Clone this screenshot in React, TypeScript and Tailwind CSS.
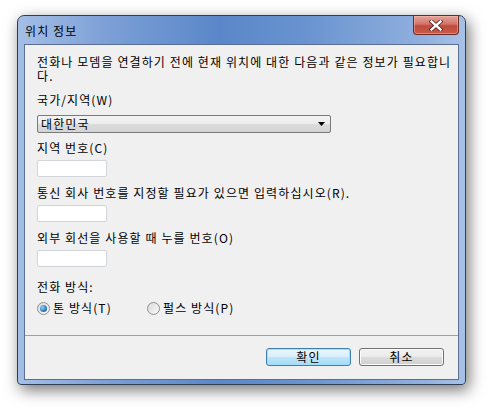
const font = { fontFamily: '"Noto Sans CJK KR", "Noto Sans", sans-serif' };

function CloseButton() {
  return (
    <div className="w-[46px] h-[19px] rounded-b-[4px] border border-t-0 border-[#6a2b26] bg-[linear-gradient(#e6a397_0%,#d1746a_45%,#c04a3c_55%,#c95a45_100%)] shadow-[inset_0_0_0_1px_rgba(255,200,190,0.45)] flex items-center justify-center">
      <svg width="14" height="11" viewBox="0 0 14 11">
        <path d="M2.5 1.5 L11.5 9.5 M11.5 1.5 L2.5 9.5" stroke="#5a1e18" strokeWidth="4" strokeLinecap="square" />
        <path d="M2.5 1.5 L11.5 9.5 M11.5 1.5 L2.5 9.5" stroke="#ffffff" strokeWidth="2.4" strokeLinecap="square" />
      </svg>
    </div>
  );
}

function Field() {
  return <div className="w-[70px] h-[17px] bg-white border border-[#d2d5da] rounded-[2px]" />;
}

function Radio({ checked, label }: { checked?: boolean; label: string }) {
  return (
    <div className="flex items-center gap-[3px]">
      <div className="w-[13px] h-[13px] rounded-full border border-[#8e8f8f] bg-[linear-gradient(135deg,#d9d9d9,#fafafa)] flex items-center justify-center">
        {checked && (
          <div className="w-[7px] h-[7px] rounded-full bg-[radial-gradient(circle_at_35%_35%,#8fd3f7,#1c6fae_70%,#0f4f86)]" />
        )}
      </div>
      <span>{label}</span>
    </div>
  );
}

export default function App() {
  return (
    <div className="w-[490px] h-[409px] bg-white text-[12px] tracking-[1.1px] text-black overflow-hidden" style={font}>
      <div className="ml-[17px] mt-[15px] w-[449px] h-[370px] rounded-t-[7px] rounded-b-[4px] border border-[#2f3d55] bg-[linear-gradient(90deg,#a4bfe6_0%,#7c9fd6_20%,#5a87c9_45%,#6a94d0_65%,#90afde_90%,#a8c2e6_100%)] shadow-[3px_5px_15px_rgba(0,0,0,0.55)] flex flex-col">
        <div className="h-[28px] flex items-start justify-between pl-[7px] pr-[6px]">
          <div className="pt-[8px] leading-[14px] text-[12px] text-black">위치 정보</div>
          <CloseButton />
        </div>
        <div className="mx-[6px] mb-[4px] flex-1 border border-[#5c6f92] bg-[#f0f0f0] flex flex-col">
          <div className="px-[12px] pt-[10px]">
            <div className="leading-[14px]">
              <div className="whitespace-nowrap">전화나 모뎀을 연결하기 전에 현재 위치에 대한 다음과 같은 정보가 필요합니</div>
              <div>다.</div>
            </div>
            <div className="mt-[10px] leading-[14px]">국가/지역(W)</div>
            <div className="mt-[8px] w-[294px] h-[18px] border border-[#7a7a7a] rounded-[2px] bg-[linear-gradient(#f3f3f3_0%,#ececec_50%,#dcdcdc_51%,#d4d4d4_100%)] flex items-center justify-between pl-[3px] pr-[5px]">
              <span className="leading-[14px]">대한민국</span>
              <svg width="7" height="4" viewBox="0 0 7 4">
                <path d="M0 0 H7 L3.5 4 Z" fill="#000" />
              </svg>
            </div>
            <div className="mt-[8px] leading-[14px]">지역 번호(C)</div>
            <div className="mt-[5px]"><Field /></div>
            <div className="mt-[9px] leading-[14px]">통신 회사 번호를 지정할 필요가 있으면 입력하십시오(R).</div>
            <div className="mt-[5px]"><Field /></div>
            <div className="mt-[9px] leading-[14px]">외부 회선을 사용할 때 누를 번호(O)</div>
            <div className="mt-[5px]"><Field /></div>
            <div className="mt-[13px] leading-[14px]">전화 방식:</div>
            <div className="mt-[7px] leading-[14px] flex">
              <div className="w-[110px]"><Radio checked label="톤 방식(T)" /></div>
              <Radio label="펄스 방식(P)" />
            </div>
          </div>
          <div className="mt-[20px] h-px bg-[#a0a0a0]" />
          <div className="mt-[12px] pr-[14px] flex justify-end gap-[8px]">
            <div className="w-[85px] h-[18px] rounded-[3px] border border-[#3c7fb1] bg-[linear-gradient(#eaf6fd_0%,#d9f0fc_50%,#bee6fd_51%,#a7d9f5_100%)] shadow-[inset_0_0_0_1px_#9fe0fd] flex items-center justify-center leading-[14px]">확인</div>
            <div className="w-[85px] h-[18px] rounded-[3px] border border-[#707070] bg-[linear-gradient(#f2f2f2_0%,#ebebeb_50%,#dddddd_51%,#cfcfcf_100%)] shadow-[inset_0_0_0_1px_#fcfcfc] flex items-center justify-center leading-[14px]">취소</div>
          </div>
        </div>
      </div>
    </div>
  );
}
